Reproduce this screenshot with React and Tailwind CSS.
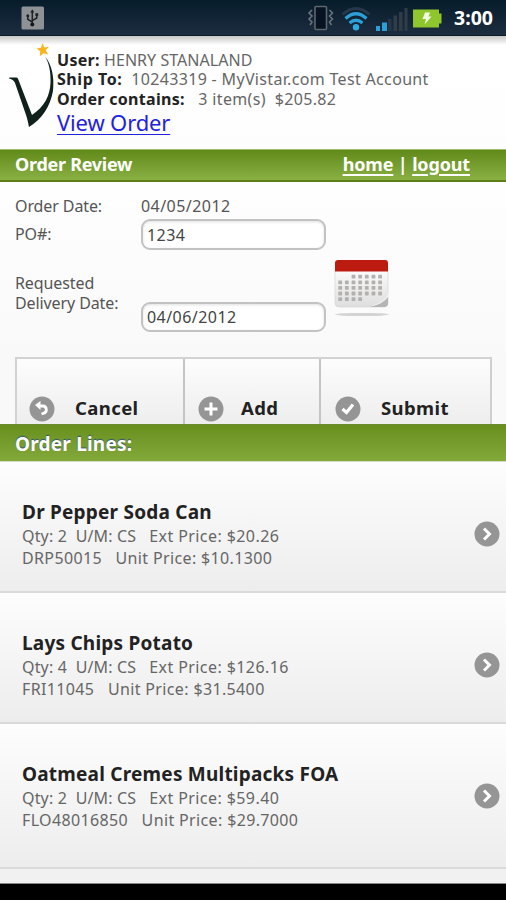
import React, { useState } from 'react';

const orderLines = [
    { name: 'Dr Pepper Soda Can', qty: 2, ext: '$20.26', sku: 'DRP50015', unit: '$10.1300', height: 'h-[131px]' },
    { name: 'Lays Chips Potato', qty: 4, ext: '$126.16', sku: 'FRI11045', unit: '$31.5400', height: 'h-[131px]' },
    { name: 'Oatmeal Cremes Multipacks FOA', qty: 2, ext: '$59.40', sku: 'FLO48016850', unit: '$29.7000', height: 'h-[145px]' },
];

// the first row of days starts on the third column, the last one stops at the fourth
const calendarDots = [];
for (let row = 0; row < 5; row++) {
    for (let col = 0; col < 7; col++) {
        if (row === 0 && col < 2) continue;
        if (row === 4 && col > 3) continue;
        calendarDots.push({ x: 6.2 + col * 6.65, y: 17.5 + row * 5.6 });
    }
}

const StatusBar = () => (
    <div className="h-[36px] shrink-0 bg-linear-to-b from-[#061c2b] to-[#1c2d40] border-b border-[#0c1a28] flex items-center pl-[21px] pr-[12px]">
        <svg width="24" height="24" viewBox="0 0 24 24">
            <rect x="0.5" y="0.5" width="22.5" height="23" rx="1.5" fill="#8e9295" />
            <g stroke="#1d2226" strokeWidth="1.5" fill="none">
                <path d="M11.3 19V5M11.3 16L6.8 13.4V9.5M11.3 14.6L15.8 12V8.5" />
            </g>
            <circle cx="11.3" cy="18.6" r="2" fill="#15191c" />
            <path d="M11.3 3.2L13.3 6.6H9.3Z" fill="#1d2226" />
            <circle cx="6.8" cy="9.8" r="1.5" fill="#1d2226" />
            <rect x="14.4" y="7.2" width="2.8" height="2.8" fill="#1d2226" />
        </svg>

        <div className="ml-auto flex items-center">
            {/* VIBRATE */}
            <svg width="28" height="26" viewBox="0 0 28 26">
                <rect x="8" y="1.5" width="11.5" height="23" rx="1" fill="#071320" stroke="#5d666f" strokeWidth="1.6" />
                <path d="M5 5L2 8L5 11L2 14L5 17L3 20M22.5 5L25.5 8L22.5 11L25.5 14L22.5 17L24.5 20" fill="none" stroke="#6d757c" strokeWidth="1.5" />
            </svg>
            {/* WIFI */}
            <svg className="ml-[6px]" width="30" height="26" viewBox="0 0 30 26">
                <g fill="none" strokeWidth="2.8">
                    <path d="M1.5 9.5Q15 -2.5 28.5 9.5" stroke="#26394b" />
                    <path d="M4.5 13.5Q15 4 25.5 13.5" stroke="#2b9fd6" strokeWidth="3.2" />
                    <path d="M8.5 18Q15 12.5 21.5 18" stroke="#2b9fd6" strokeWidth="3.2" />
                </g>
                <circle cx="15" cy="22.300" r="3.2" fill="#2fa8e0" />
            </svg>
            {/* SIGNAL */}
            <svg className="ml-[4px] mt-[4px]" width="34" height="24" viewBox="0 2 34 24">
                <rect x="1" y="20" width="4" height="5" fill="#2b9fd6" />
                <rect x="7" y="16.5" width="5" height="8.5" fill="#2b9fd6" />
                <rect x="13" y="13" width="3.5" height="12" fill="#273642" />
                <rect x="18.5" y="9.5" width="3.5" height="15.5" fill="#303c47" />
                <rect x="24" y="6" width="3.5" height="19" fill="#303c47" />
                <rect x="29.5" y="2" width="3" height="23" fill="#303c47" />
            </svg>
            {/* BATTERY */}
            <svg className="ml-[4px] mt-[1px]" width="29" height="19" viewBox="0 0 29 19">
                <path d="M0 0.5H26V4.5H28.5V14.5H26V18.5H0Z" fill="#8fc62d" />
                <path d="M12 3.5H17L15.5 7.5H18.5L11.5 15.5L13 10H9.5Z" fill="#f2f7e4" />
            </svg>
            <div className="ml-[12px] mt-[1px] w-[40px] text-[19.5px] leading-[24px] font-bold text-white whitespace-nowrap">3:00</div>
        </div>
    </div>
);

const Header = () => (
    <div className="h-[113px] shrink-0 flex bg-linear-to-b from-[#c8c8c8] via-white via-[9px] to-[#fdfdfd]">
        <svg className="ml-[8px] mt-[6px] shrink-0" width="49" height="88" viewBox="0 0 49 88">
            <path d="M34.5 1L36.4 5.4L41 4.8L37.7 8.2L40.2 12.6L35.6 11.3L31.8 14.2L32.2 9.2L28.5 6.4L33 5.7Z" fill="#f6b51e" />
            <path d="M37 14.500C44 23 46.500 35 45 49C42 65 34 77 21 85C20 80 19.500 77 17 70L7 41C5.500 37.500 3 37 1 36.500L1.500 35.500H8.500C9.500 35.500 10 36.500 10.500 38L24 73C36 65 42 54 42.500 41C43 30 41 21 37 14.500Z" fill="#10201a" />
        </svg>
        <div className="pt-[14.5px] text-[16px] leading-[19.7px] text-[#666] whitespace-pre">
            <div className="tracking-[0.05px]"><b className="text-[#222] tracking-[0.3px]">User:</b> HENRY STANALAND</div>
            <div className="tracking-[0.33px]"><b className="text-[#222] tracking-[0.55px]">Ship To:</b>  10243319 - MyVistar.com Test Account</div>
            <div className="tracking-[0.33px]"><b className="text-[#222] tracking-[0.3px]">Order contains:</b>   3 item(s)  $205.82</div>
            <a href="#" className="block w-fit text-[22px] leading-[25px] tracking-[-0.15px] text-[#2222dd] underline decoration-1 underline-offset-[3px]">View Order</a>
        </div>
    </div>
);

const TitleBar = () => (
    <div className="h-[33px] shrink-0 px-[15px] pr-[36px] flex items-center justify-between border-t border-b-2 border-t-[#a3b868] border-b-[#5c8016] bg-linear-to-b from-[#608a18] to-[#8ab043] text-white text-[18px] leading-[24px] font-bold tracking-[-0.27px]">
        <h1 className="pb-[2px]">Order Review</h1>
        <div className="pb-[2px] whitespace-pre tracking-[-0.15px]">
            <a href="#" className="underline decoration-2 underline-offset-[3px]">home</a> | <a href="#" className="underline decoration-2 underline-offset-[3px]">logout</a>
        </div>
    </div>
);

const Calendar = () => (
    <svg className="ml-[8px] mt-[8px]" width="60" height="62" viewBox="0 0 60 62">
        <defs>
            <linearGradient id="page" x1="0" y1="0" x2="0" y2="1">
                <stop offset="0" stopColor="#fbfbfb" />
                <stop offset="1" stopColor="#dedede" />
            </linearGradient>
        </defs>
        <path d="M1 11H54V44Q54 48 50 48H5Q1 48 1 44Z" fill="url(#page)" stroke="#d6d6d6" strokeWidth="0.7" />
        <path d="M54 36Q50 45 36 48H50Q54 48 54 44Z" fill="#b5b5b5" />
        <path d="M54 34Q52 43 36 47Q49 45.500 54 38Z" fill="#f2f2f2" />
        <path d="M1 12.500V4Q1 1 4 1H51Q54 1 54 4V12.500Z" fill="#bd1a10" />
        {calendarDots.map((d) => (
            <rect key={`${d.x}-${d.y}`} x={d.x - 1.9} y={d.y - 1.7} width="3.8" height="3.8" rx="0.6" fill="#b3b1b0" />
        ))}
        <ellipse cx="28" cy="55.500" rx="27" ry="1.600" fill="#d3d3d3" />
    </svg>
);

const inputStyle = 'block w-[185px] border-2 border-[#c2c2c2] rounded-[9px] bg-white px-[4px] text-[16px] text-[#444] tracking-[0.45px] outline-none shadow-[inset_0_1px_3px_rgba(0,0,0,0.12)]';

const OrderForm = () => {
    const [po, setPo] = useState('1234');
    const [date, setDate] = useState('04/06/2012');

    return (
        <div className="h-[175px] shrink-0 pl-[15px] pt-[14px] bg-linear-to-b from-[#fefefe] to-[#f9f9f9] text-[16px] leading-[20px] text-[#555] tracking-[-0.1px]">
            <div className="flex h-[23px]">
                <div className="w-[126px]">Order Date:</div>
                <div className="tracking-[0.45px]">04/05/2012</div>
            </div>
            <div className="flex h-[32px]">
                <div className="w-[126px] pt-[5px]">PO#:</div>
                <input className={`${inputStyle} h-[31px]`} value={po} onChange={(e) => setPo(e.target.value)} />
            </div>
            <div className="flex h-[72px]">
                <div className="w-[126px] pt-[22px]">Requested<br />Delivery Date:</div>
                <input className={`${inputStyle} h-[30px] mt-[51px]`} value={date} onChange={(e) => setDate(e.target.value)} />
                <Calendar />
            </div>
        </div>
    );
};

const RoundIcon = ({ children, className }) => (
    <svg className={className} width="26" height="26" viewBox="0 0 26 26">
        <circle cx="13" cy="13" r="12.500" fill="#959595" />
        <g fill="none" stroke="#fff" strokeWidth="3">{children}</g>
    </svg>
);

const Actions = () => (
    <div className="h-[67px] shrink-0 pl-[15px] pr-[14px] bg-[#f9f9f9] overflow-hidden">
        <div className="h-[90px] flex border-t-2 border-l-2 border-[#d2d2d2] bg-linear-to-b from-[#fdfdfd] to-[#e8e8e8] text-[18.5px] leading-[24px] font-bold text-[#222] tracking-[0.4px]">
            <button className="w-[168px] border-r-2 border-[#c4c4c4] flex items-start pt-[37px] pl-[12px]">
                <RoundIcon>
                    <path d="M10 10H13.800A3.700 3.700 0 0 1 14.500 17.300L12.500 18" strokeWidth="2.800" />
                    <path d="M6 9L11.500 5V14Z" fill="#fff" stroke="none" />
                </RoundIcon>
                <span className="ml-[20px]">Cancel</span>
            </button>
            <button className="w-[136px] border-r-2 border-[#c4c4c4] flex items-start pt-[37px] pl-[13px]">
                <RoundIcon><path d="M13 6.500V19.500M6.500 13H19.500" /></RoundIcon>
                <span className="ml-[17px]">Add</span>
            </button>
            <button className="flex-1 border-r-2 border-[#cfcfcf] flex items-start pt-[37px] pl-[14px]">
                <RoundIcon><path d="M7.500 13L11.500 16.500L18 8.500" strokeWidth="3.200" /></RoundIcon>
                <span className="ml-[20px]">Submit</span>
            </button>
        </div>
    </div>
);

const OrderLine = ({ line }) => (
    <div className={`${line.height} shrink-0 flex justify-between pl-[22px] pr-[6px] border-b-2 border-[#dadada] bg-linear-to-b from-[#fdfdfd] to-[#ededed]`}>
        <div className="pt-[37px] whitespace-pre text-[#666] text-[16px] leading-[21.5px] tracking-[0.36px]">
            <h2 className="text-[19px] leading-[26px] font-bold text-[#222] tracking-[0.22px]">{line.name}</h2>
            <p className="pt-[1px]">
                <span className="tracking-[0.16px]">{`Qty: ${line.qty}  U/M: CS   `}</span>
                <span className="tracking-[0.42px]">{`Ext Price: ${line.ext}`}</span>
            </p>
            <p>{`${line.sku}   Unit Price: ${line.unit}`}</p>
        </div>
        <RoundIcon className="mt-[59px]"><path d="M10 7.500L15.500 13L10 18.500" /></RoundIcon>
    </div>
);

const App = () => (
    <div className="w-[506px] h-[900px] flex flex-col overflow-hidden bg-black font-['Noto_Sans','Open_Sans',sans-serif]">
        <StatusBar />
        <Header />
        <TitleBar />
        <OrderForm />
        <Actions />
        <div className="h-[38px] shrink-0 pl-[15px] pt-[3px] flex items-center border-t border-b border-t-[#6d8b32] border-b-[#d5dbc8] bg-linear-to-b from-[#688f1d] to-[#84a93b] text-white text-[19px] font-bold tracking-[0.2px] [text-shadow:0_-1px_1px_#2d5478]">Order Lines:</div>
        {orderLines.map((line) => (
            <OrderLine key={line.sku} line={line} />
        ))}
        <div className="h-[15px] shrink-0 bg-[#f1f1f1] border-b border-[#888]"></div>
    </div>
);

export default App;
